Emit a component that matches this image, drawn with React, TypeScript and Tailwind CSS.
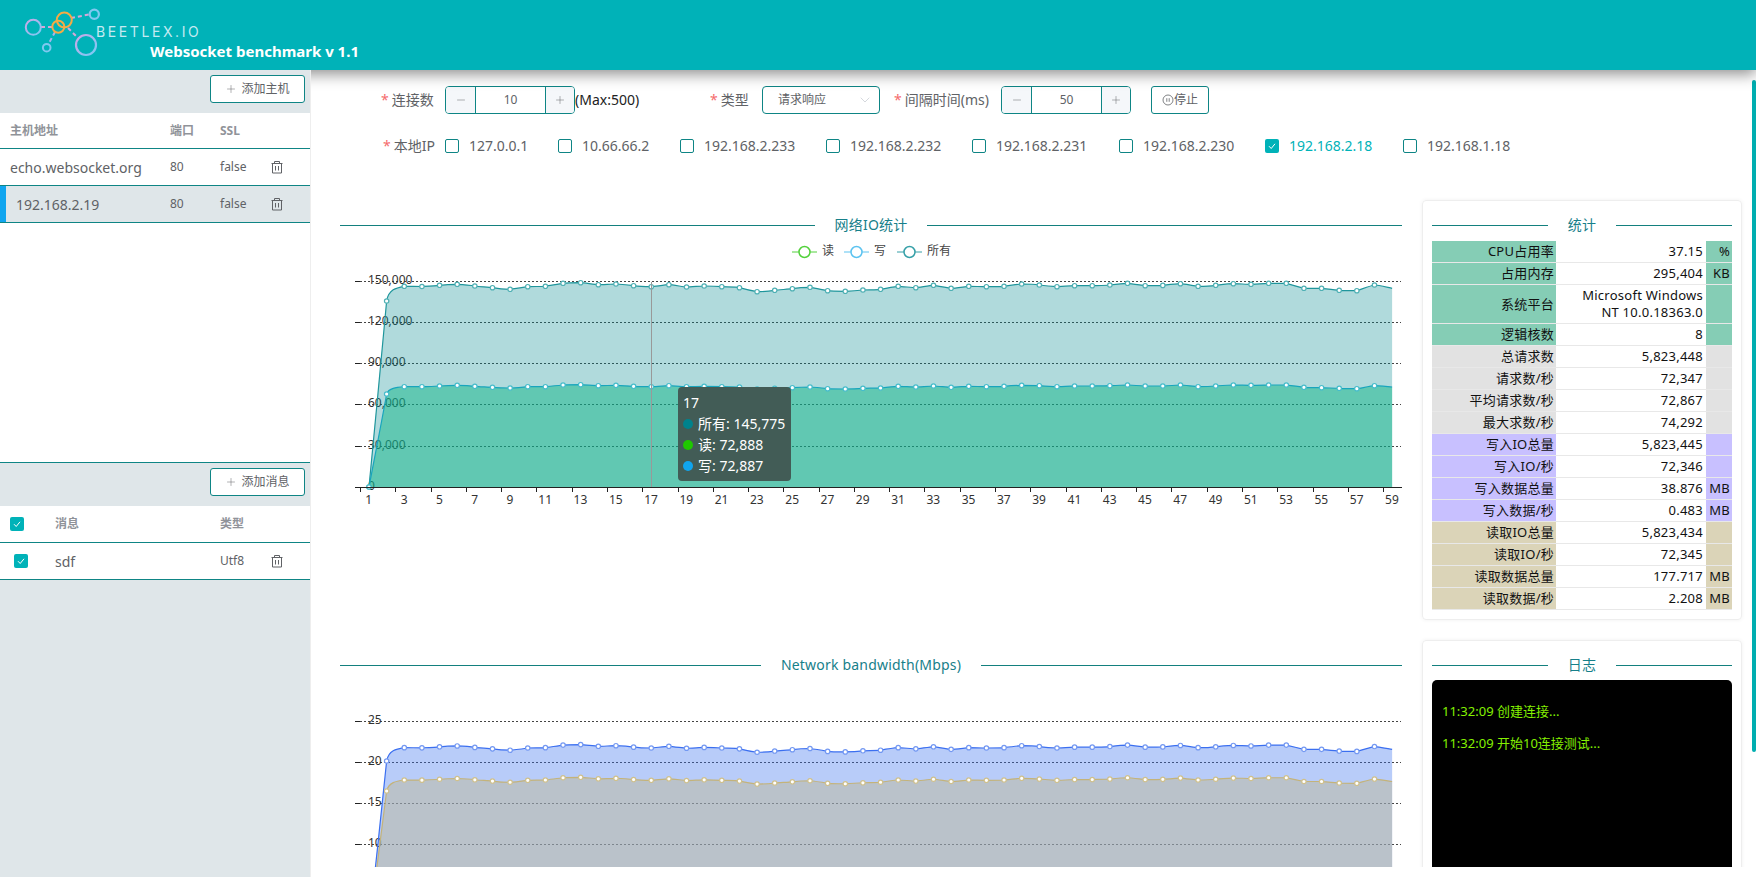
import { ChevronDown, Minus, Plus } from "lucide-react";

// y position of the "all" series as read off the chart, index 0 is x label 1
const topY = [
  487, 301, 286.3, 286.5, 285.3, 284.3, 286, 287.7, 289.3, 286.7, 286.3, 283.3, 282.7, 284.7, 284, 285.7, 286.7,
  284.7, 287, 286, 286.7, 287.7, 291.7, 290.3, 288.7, 287.3, 290.7, 291.3, 290, 289.3, 286.3, 287.7, 285.3, 288.3,
  286.3, 286.7, 286.3, 284, 285, 286.7, 285.7, 285.7, 285, 283.3, 285.7, 285.4, 283.7, 286.3, 285.3, 283.7, 284.3,
  283.3, 283.3, 288.3, 288.3, 290.3, 290.7, 285, 288.3,
];
const lowY = [
  487, 394, 386.7, 386.7, 386, 385.3, 386.3, 387.3, 388, 386.7, 386.7, 385, 384.7, 385.7, 385.3, 386.3, 386.7, 385.7,
  386.7, 386.3, 386.7, 387, 389, 388.3, 387.7, 387, 388.7, 389, 388.3, 388, 386.3, 387, 386, 387.3, 386.3, 386.7,
  386.3, 385.3, 385.7, 386.7, 386, 386, 385.7, 385, 386, 386, 385, 386.7, 386, 385, 385.3, 385, 385, 387.3, 387.7,
  388.3, 388.7, 385.7, 387,
];
const blueY = topY.map((y, i) => {
  if (i === 0) return 927;
  if (i === 1) return 761;
  return 748 + (y - 286.7) * 0.85;
});
const tanY = topY.map((y, i) => {
  if (i === 0) return 927;
  if (i === 1) return 791;
  return 780.3 + (y - 286.7) * 0.75;
});

const xOf = (i: number) => 369 + i * 17.64;

function linePath(ys: number[]) {
  let d = `M${xOf(0)} ${ys[0]}`;
  for (let i = 0; i < ys.length - 1; i++) {
    if (i === 1) {
      // the shoulder after the first climb is rounder than the rest of the curve
      const diff = ys[1] - ys[2];
      d += ` C${xOf(1) + 2} ${ys[2] + diff * 0.2} ${xOf(2) - 8} ${ys[2] + diff * 0.1} ${xOf(2)} ${ys[2]}`;
      continue;
    }
    const prev = ys[Math.max(i - 1, 0)];
    const next = ys[Math.min(i + 2, ys.length - 1)];
    const lo = Math.min(ys[i], ys[i + 1]);
    const hi = Math.max(ys[i], ys[i + 1]);
    const c1 = Math.min(hi, Math.max(lo, ys[i] + (ys[i + 1] - prev) * 0.2));
    const c2 = Math.min(hi, Math.max(lo, ys[i + 1] - (next - ys[i]) * 0.2));
    d += ` C${xOf(i) + 3.5} ${c1} ${xOf(i + 1) - 3.5} ${c2} ${xOf(i + 1)} ${ys[i + 1]}`;
  }
  return d;
}

function areaPath(ys: number[], base: number) {
  return `${linePath(ys)} L${xOf(ys.length - 1)} ${base} L${xOf(0)} ${base} Z`;
}

function Series(props: { ys: number[]; base: number; fill: string; opacity: number; stroke: string; dot: string }) {
  return (
    <g>
      <path d={areaPath(props.ys, props.base)} fill={props.fill} fillOpacity={props.opacity} />
      <path d={linePath(props.ys)} fill="none" stroke={props.stroke} strokeWidth="1.2" />
      {props.ys.slice(0, -1).map((y, i) => (
        <circle key={i} cx={xOf(i)} cy={y} r="2.2" fill="#fff" stroke={props.dot} strokeWidth="1.2" />
      ))}
    </g>
  );
}

function GridLine({ y, label }: { y: number; label: string }) {
  return (
    <g>
      <line x1="355" x2="360" y1={y} y2={y} stroke="#222" />
      <line x1="360" x2="1401" y1={y} y2={y} stroke="#444" strokeDasharray="2 2" />
      <text x="368" y={y + 2.5} fontSize="12" fill="#333">
        {label}
      </text>
    </g>
  );
}

function NetworkChart() {
  const ticks = Array.from({ length: 31 }, (_, i) => 360 + i * 35.28);
  return (
    <svg viewBox="340 240 1062 290" className="block h-[290px] w-[1062px]">
      <GridLine y={281.5} label="150,000" />
      <GridLine y={322.5} label="120,000" />
      <GridLine y={363.5} label="90,000" />
      <GridLine y={404.5} label="60,000" />
      <GridLine y={446.5} label="30,000" />
      <text x="368" y="490" fontSize="12" fill="#333">
        0
      </text>
      <Series ys={topY} base={487} fill="rgb(0,135,142)" opacity={0.31} stroke="#1f969c" dot="#4fb0b4" />
      <Series ys={lowY} base={487} fill="rgb(17,182,136)" opacity={0.5} stroke="#18a5bd" dot="#45bccb" />
      <line x1="651.5" x2="651.5" y1="282" y2="487" stroke="#999" />
      <line x1="355" x2="1402" y1="487.5" y2="487.5" stroke="#222" />
      {ticks.map((x, i) => (
        <g key={i}>
          <line x1={Math.round(x) + 0.5} x2={Math.round(x) + 0.5} y1="487" y2="492" stroke="#222" />
          {i < 30 && (
            <text x={x + 8.8} y="504" fontSize="12" fill="#333" textAnchor="middle">
              {i * 2 + 1}
            </text>
          )}
        </g>
      ))}
      {/* legend */}
      <line x1="792" x2="817" y1="252" y2="252" stroke="#53d13c" />
      <circle cx="804.5" cy="252" r="5.5" fill="#fff" stroke="#53d13c" strokeWidth="1.5" />
      <text x="822" y="255" fontSize="12" fill="#444">
        读
      </text>
      <line x1="844" x2="869" y1="252" y2="252" stroke="#5cc3f0" />
      <circle cx="856.5" cy="252" r="5.5" fill="#fff" stroke="#5cc3f0" strokeWidth="1.5" />
      <text x="874" y="255" fontSize="12" fill="#444">
        写
      </text>
      <line x1="897" x2="922" y1="252" y2="252" stroke="#36a0a8" />
      <circle cx="909.5" cy="252" r="5.5" fill="#fff" stroke="#36a0a8" strokeWidth="1.5" />
      <text x="927" y="255" fontSize="12" fill="#444">
        所有
      </text>
    </svg>
  );
}

function BandwidthChart() {
  return (
    <svg viewBox="340 690 1062 240" className="block h-[240px] w-[1062px]">
      <GridLine y={721.5} label="25" />
      <GridLine y={762.5} label="20" />
      <GridLine y={803.5} label="15" />
      <GridLine y={844.5} label="10" />
      <Series ys={blueY} base={927} fill="rgb(58,114,239)" opacity={0.36} stroke="#3b6ff0" dot="#7398f2" />
      <Series ys={tanY} base={927} fill="rgb(188,184,155)" opacity={0.5} stroke="#c4b37a" dot="#cfc08d" />
    </svg>
  );
}

function TrashIcon() {
  return (
    <svg viewBox="0 0 14 14" className="h-[14px] w-[14px]" fill="none" stroke="#606266" strokeWidth="1">
      <path d="M1.5 3.5h11M4.5 3.5V1.5h5v2M2.5 3.5v9.5h9V3.5M5.5 6v4.5M8.5 6v4.5" />
    </svg>
  );
}

function CheckBox({ checked }: { checked?: boolean }) {
  if (checked) {
    return (
      <span className="flex h-[14px] w-[14px] shrink-0 items-center justify-center rounded-[2px] bg-[#00b2b8]">
        <svg viewBox="0 0 14 14" className="h-[14px] w-[14px]" fill="none" stroke="#fff" strokeWidth="1">
          <path d="M4 7.2l2.2 2.3L10 4.8" />
        </svg>
      </span>
    );
  }
  return <span className="block h-[14px] w-[14px] shrink-0 rounded-[2px] border border-[#0e8585] bg-white"></span>;
}

function AddButton({ text }: { text: string }) {
  return (
    <button className="flex h-[28px] w-[95px] items-center justify-center gap-[4px] rounded-[3px] border border-[#0e8585] bg-white text-[12px] text-[#606266]">
      <Plus className="h-[12px] w-[12px]" strokeWidth={1} />
      {text}
    </button>
  );
}

function NumberBox({ value }: { value: number }) {
  return (
    <div className="flex h-[28px] w-[130px] items-center overflow-hidden rounded-[4px] border border-[#0e8585] text-[12px] text-[#606266]">
      <span className="flex h-full w-[29px] items-center justify-center bg-[#f5f7fa]">
        <Minus className="h-[12px] w-[12px]" strokeWidth={1} />
      </span>
      <span className="flex h-full flex-1 items-center justify-center border-x border-[#0e8585]">{value}</span>
      <span className="flex h-full w-[28px] items-center justify-center bg-[#f5f7fa]">
        <Plus className="h-[12px] w-[12px]" strokeWidth={1} />
      </span>
    </div>
  );
}

function FieldLabel({ text, className }: { text: string; className: string }) {
  return (
    <span className={`flex shrink-0 items-center whitespace-nowrap pb-[2px] text-[14px] text-[#606266] ${className}`}>
      <span className="mr-[3px] text-[#f56c6c]">*</span>
      {text}
    </span>
  );
}

function SectionTitle({ text }: { text: string }) {
  return (
    <div className="flex h-[20px] items-center gap-[20px] text-[14px] text-[#17808a]">
      <span className="h-px flex-1 bg-[#13807e]"></span>
      <span className="whitespace-nowrap pb-[2px] tracking-[0.2px]">{text}</span>
      <span className="h-px flex-1 bg-[#13807e]"></span>
    </div>
  );
}

const ips = [
  { ip: "127.0.0.1", w: "w-[113px]" },
  { ip: "10.66.66.2", w: "w-[122px]" },
  { ip: "192.168.2.233", w: "w-[146px]" },
  { ip: "192.168.2.232", w: "w-[146px]" },
  { ip: "192.168.2.231", w: "w-[147px]" },
  { ip: "192.168.2.230", w: "w-[146px]" },
  { ip: "192.168.2.18", w: "w-[138px]", on: true },
  { ip: "192.168.1.18", w: "w-[120px]" },
];

const green = "bg-[#85cdb5]";
const gray = "bg-[#e2e2e2]";
const purple = "bg-[#c8c0ff]";
const tan = "bg-[#dbd4b8]";

const stats = [
  { name: "CPU占用率", value: "37.15", unit: "%", color: green },
  { name: "占用内存", value: "295,404", unit: "KB", color: green },
  { name: "系统平台", value: "Microsoft Windows NT 10.0.18363.0", unit: "", color: green, tall: true },
  { name: "逻辑核数", value: "8", unit: "", color: green },
  { name: "总请求数", value: "5,823,448", unit: "", color: gray },
  { name: "请求数/秒", value: "72,347", unit: "", color: gray },
  { name: "平均请求数/秒", value: "72,867", unit: "", color: gray },
  { name: "最大求数/秒", value: "74,292", unit: "", color: gray },
  { name: "写入IO总量", value: "5,823,445", unit: "", color: purple },
  { name: "写入IO/秒", value: "72,346", unit: "", color: purple },
  { name: "写入数据总量", value: "38.876", unit: "MB", color: purple },
  { name: "写入数据/秒", value: "0.483", unit: "MB", color: purple },
  { name: "读取IO总量", value: "5,823,434", unit: "", color: tan },
  { name: "读取IO/秒", value: "72,345", unit: "", color: tan },
  { name: "读取数据总量", value: "177.717", unit: "MB", color: tan },
  { name: "读取数据/秒", value: "2.208", unit: "MB", color: tan },
];

function Logo() {
  return (
    <svg viewBox="0 0 110 64" className="h-[64px] w-[110px] shrink-0" fill="none">
      <defs>
        <linearGradient id="ring" x1="0" y1="0" x2="1" y2="1">
          <stop offset="0" stopColor="#cfa6e6" />
          <stop offset="1" stopColor="#76ccf5" />
        </linearGradient>
      </defs>
      <g strokeWidth="2" strokeDasharray="4 3">
        <path d="M41 27h11" stroke="#d8a6d8" />
        <path d="M71 18l18-3.5" stroke="#d8a6d8" />
        <path d="M68 28l10 10" stroke="#d8a6d8" />
        <path d="M55 32l-6 11" stroke="#a8b4ec" />
      </g>
      <circle cx="33.3" cy="27.3" r="7.5" stroke="url(#ring)" strokeWidth="2" />
      <circle cx="64.3" cy="20" r="7.5" stroke="#f5ab45" strokeWidth="2" />
      <circle cx="58.3" cy="26.7" r="6" stroke="#f5ab45" strokeWidth="2" />
      <circle cx="94.3" cy="14.3" r="4.6" stroke="#80c8f0" strokeWidth="2.2" />
      <circle cx="86" cy="45" r="10" stroke="url(#ring)" strokeWidth="2.2" />
      <circle cx="46.7" cy="47.7" r="3.8" stroke="#80c8f0" strokeWidth="2" />
    </svg>
  );
}

export default function App() {
  return (
    <div className="flex h-screen w-full flex-col overflow-hidden bg-white font-['Noto_Sans','Noto_Sans_CJK_SC',sans-serif]">
      {/* header */}
      <header className="relative z-10 flex h-[70px] shrink-0 bg-[#00b2b8] shadow-[0_4px_14px_rgba(0,0,0,0.45)]">
        <Logo />
        <div className="-ml-[14px] flex flex-col">
          <span className="mt-[23px] font-['Inter',sans-serif] text-[14px] font-normal leading-[18px] tracking-[2.6px] text-[#c4eaf2]">
            BEETLEX.IO
          </span>
          <span className="ml-[54px] whitespace-nowrap text-[15px] font-bold leading-[20px] text-white">
            Websocket benchmark v 1.1
          </span>
        </div>
      </header>

      <div className="flex min-h-0 flex-1">
        {/* sidebar */}
        <aside className="relative z-20 flex w-[311px] shrink-0 flex-col border-r border-[#eeeeee] bg-white">
          <div className="flex h-[43px] items-start justify-end bg-[#dfe6e9] pr-[5px] pt-[5px]">
            <AddButton text="添加主机" />
          </div>
          <div className="flex h-[36px] items-center border-b border-[#0e8585] text-[12px] font-bold text-[#909399]">
            <span className="ml-[10px] w-[160px]">主机地址</span>
            <span className="w-[50px]">端口</span>
            <span>SSL</span>
          </div>
          <div className="flex h-[37px] items-center border-b border-[#0e8585] text-[12px] text-[#606266]">
            <span className="ml-[10px] w-[160px] text-[14px]">echo.websocket.org</span>
            <span className="w-[50px]">80</span>
            <span className="w-[50px]">false</span>
            <TrashIcon />
          </div>
          <div className="flex h-[37px] items-center border-b border-[#0e8585] bg-[#dfe6e9] text-[12px] text-[#606266]">
            <span className="h-full w-[6px] bg-[#10a5ef]"></span>
            <span className="ml-[10px] w-[154px] text-[14px]">192.168.2.19</span>
            <span className="w-[50px]">80</span>
            <span className="w-[50px]">false</span>
            <TrashIcon />
          </div>
          <div className="h-[240px] border-b border-[#0e8585]"></div>
          <div className="flex h-[43px] items-start justify-end bg-[#dfe6e9] pr-[5px] pt-[5px]">
            <AddButton text="添加消息" />
          </div>
          <div className="flex h-[37px] items-center border-b border-[#0e8585] text-[12px] font-bold text-[#909399]">
            <span className="ml-[10px]">
              <CheckBox checked />
            </span>
            <span className="ml-[31px] w-[165px]">消息</span>
            <span>类型</span>
          </div>
          <div className="flex h-[37px] items-center border-b border-[#0e8585] text-[12px] text-[#606266]">
            <span className="ml-[14px]">
              <CheckBox checked />
            </span>
            <span className="ml-[27px] w-[165px] text-[14px]">sdf</span>
            <span className="w-[50px]">Utf8</span>
            <TrashIcon />
          </div>
          <div className="flex-1 bg-[#dfe6e9]"></div>
        </aside>

        {/* main area */}
        <main className="flex min-w-0 flex-1">
          <div className="h-[797px] min-w-0 flex-1 overflow-hidden">
            <div className="mt-[16px] flex h-[28px] items-center pl-[70px]">
              <FieldLabel text="连接数" className="w-[52px]" />
              <span className="ml-[12px]">
                <NumberBox value={10} />
              </span>
              <span className="w-[66px] pb-[2px] text-[14px] text-[#222]">(Max:500)</span>
              <FieldLabel text="类型" className="ml-[69px] w-[38px]" />
              <div className="ml-[14px] flex h-[28px] w-[118px] items-center justify-between rounded-[4px] border border-[#0e8585] pl-[15px] pr-[6px] text-[12px] text-[#606266]">
                请求响应
                <ChevronDown className="h-[16px] w-[16px] text-[#c0c4cc]" strokeWidth={1} />
              </div>
              <FieldLabel text="间隔时间(ms)" className="ml-[14px] w-[95px]" />
              <span className="ml-[12px]">
                <NumberBox value={50} />
              </span>
              <button className="ml-[20px] flex h-[28px] w-[58px] items-center justify-center rounded-[3px] border border-[#0e8585] text-[12px] text-[#606266]">
                <svg viewBox="0 0 12 12" className="h-[12px] w-[12px]" fill="none" stroke="#606266" strokeWidth="0.8">
                  <circle cx="6" cy="6" r="5" />
                  <path d="M4.8 4.2v3.6M7.2 4.2v3.6" />
                </svg>
                停止
              </button>
            </div>

            <div className="mt-[18px] flex h-[28px] items-center pl-[72px]">
              <FieldLabel text="本地IP" className="w-[50px]" />
              <div className="ml-[12px] flex">
                {ips.map((item) => (
                  <label key={item.ip} className={`flex items-center gap-[10px] ${item.w}`}>
                    <CheckBox checked={item.on} />
                    <span className={`pb-[2px] text-[14px] ${item.on ? "text-[#00b2b8]" : "text-[#606266]"}`}>
                      {item.ip}
                    </span>
                  </label>
                ))}
              </div>
            </div>

            <div className="mt-[40px] flex pl-[29px]">
              <div className="w-[1062px] shrink-0 pt-[15px]">
                <SectionTitle text="网络IO统计" />
                <div className="relative mt-[5px]">
                  <NetworkChart />
                  <div className="absolute left-[338px] top-[147px] h-[94px] w-[113px] rounded-[4px] bg-[#425c56] p-[5px] text-[14px] leading-[21px] text-white">
                    <div>17</div>
                    {[
                      { t: "所有: 145,775", c: "bg-[#00828c]" },
                      { t: "读: 72,888", c: "bg-[#1fc800]" },
                      { t: "写: 72,887", c: "bg-[#10a5ef]" },
                    ].map((row) => (
                      <div key={row.t} className="flex items-center gap-[5px] whitespace-nowrap">
                        <span className={`h-[10px] w-[10px] rounded-full ${row.c}`}></span>
                        {row.t}
                      </div>
                    ))}
                  </div>
                </div>
                <div className="mt-[125px]">
                  <SectionTitle text="Network bandwidth(Mbps)" />
                </div>
                <div className="mt-[15px]">
                  <BandwidthChart />
                </div>
              </div>

              <div className="ml-[20px] w-[320px] shrink-0">
                <section className="h-[420px] rounded-[4px] border border-[#eeeeee] px-[9px] pt-[14px] shadow-[0_0_4px_rgba(0,0,0,0.06)]">
                  <SectionTitle text="统计" />
                  <div className="mt-[6px] text-[13px] leading-[17px] tracking-[0.25px] text-[#111]">
                    {stats.map((row) => (
                      <div
                        key={row.name}
                        className={`flex border-b border-[#e8e8e8] ${row.tall ? "h-[39px]" : "h-[22px]"}`}
                      >
                        <div className={`flex w-[124px] items-center justify-end pr-[2px] ${row.color}`}>{row.name}</div>
                        <div className="flex w-[150px] items-center justify-end pl-[24px] pr-[3px] text-right">
                          {row.value}
                        </div>
                        <div className={`flex w-[26px] items-center justify-end pr-[2px] ${row.color}`}>{row.unit}</div>
                      </div>
                    ))}
                  </div>
                </section>
                <section className="mt-[20px] h-[300px] rounded-[4px] border border-[#eeeeee] px-[9px] pt-[14px] shadow-[0_0_4px_rgba(0,0,0,0.06)]">
                  <SectionTitle text="日志" />
                  <div className="mt-[5px] h-[260px] rounded-[5px] bg-black px-[10px] pt-[21px] text-[13px] leading-[20px] text-[#84f000]">
                    <div>11:32:09 创建连接...</div>
                    <div className="mt-[12px]">11:32:09 开始10连接测试...</div>
                  </div>
                </section>
              </div>
            </div>
          </div>
          <div className="mt-[10px] h-[672px] w-[4px] shrink-0 rounded-b-[2px] rounded-t-[2px] bg-[#00aeb0]"></div>
        </main>
      </div>
    </div>
  );
}
